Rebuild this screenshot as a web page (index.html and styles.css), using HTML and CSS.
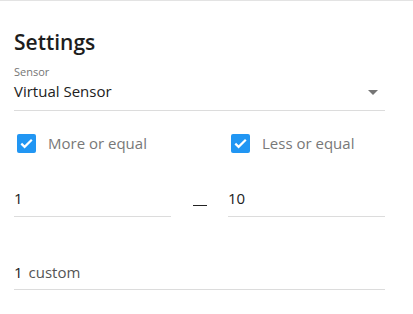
FILE: index.html
```html
<!DOCTYPE html>
<html>
<head>
<meta charset="utf-8">
<link rel="stylesheet" href="styles.css">
</head>
<body>
<div class="panel">
  <h1 class="title">Settings</h1>
  <div class="field select">
    <div class="label">Sensor</div>
    <div class="select-row">
      <span class="value">Virtual Sensor</span>
      <svg class="arrow" width="10" height="5" viewBox="0 0 10 5"><path d="M0 0H10L5 5Z" fill="#757575"/></svg>
    </div>
  </div>
  <div class="checks">
    <label class="check">
      <svg class="box" width="19" height="19" viewBox="0 0 19 19"><rect x="0" y="0" width="19" height="19" rx="2" fill="#2196f3"/><path d="M4.3 9.6l3.3 3.3 7.2-7.2" fill="none" stroke="#fff" stroke-width="2.2"/></svg>
      <span>More or equal</span>
    </label>
    <label class="check">
      <svg class="box" width="19" height="19" viewBox="0 0 19 19"><rect x="0" y="0" width="19" height="19" rx="2" fill="#2196f3"/><path d="M4.3 9.6l3.3 3.3 7.2-7.2" fill="none" stroke="#fff" stroke-width="2.2"/></svg>
      <span>Less or equal</span>
    </label>
  </div>
  <div class="range">
    <div class="field input"><span class="value">1</span></div>
    <div class="sep"><span class="dash"></span></div>
    <div class="field input"><span class="value">10</span></div>
  </div>
  <div class="field input custom">
    <span class="value">1</span><span class="suffix">custom</span>
  </div>
</div>
</body>
</html>
```
FILE: styles.css
```css
html, body {
  margin: 0;
  padding: 0;
  background: #fff;
}
body {
  font-family: "Open Sans", "Liberation Sans", sans-serif;
  color: #212121;
}
.panel {
  border-top: 1px solid #e3e3e3;
  padding: 27px 28px 0 14px;
  width: 413px;
  box-sizing: border-box;
}
.title {
  margin: 0;
  font-size: 21px;
  font-weight: 600;
  line-height: 28px;
  color: #1d1d1d;
}
.field {
  border-bottom: 1px solid #dcdcdc;
}
.select {
  margin-top: 8px;
  padding-bottom: 9px;
}
.label {
  font-size: 11px;
  line-height: 16px;
  color: #757575;
}
.select-row {
  margin-top: 1px;
  display: flex;
  align-items: center;
  justify-content: space-between;
  font-size: 15px;
  line-height: 20px;
}
.arrow {
  margin-right: 7px;
  margin-top: 2px;
}
.checks {
  display: flex;
  gap: 57px;
  margin-top: 22px;
}
.check {
  flex: 1;
  display: flex;
  align-items: center;
  gap: 12px;
  padding-left: 3px;
  font-size: 15px;
  line-height: 20px;
  color: #787878;
}
.box {
  flex: none;
}
.range {
  display: flex;
  margin-top: 35px;
}
.input {
  font-size: 15px;
  line-height: 20px;
  padding-bottom: 8px;
  display: flex;
  align-items: baseline;
}
.range .input {
  flex: 1;
}
.sep {
  width: 57px;
  flex: none;
  display: flex;
  justify-content: center;
  align-items: flex-start;
}
.dash {
  display: block;
  width: 14px;
  height: 1px;
  margin-top: 17px;
  background: #222;
}
.custom {
  margin-top: 45px;
  padding-bottom: 7px;
  gap: 6px;
}
.suffix {
  color: #555;
}
```
